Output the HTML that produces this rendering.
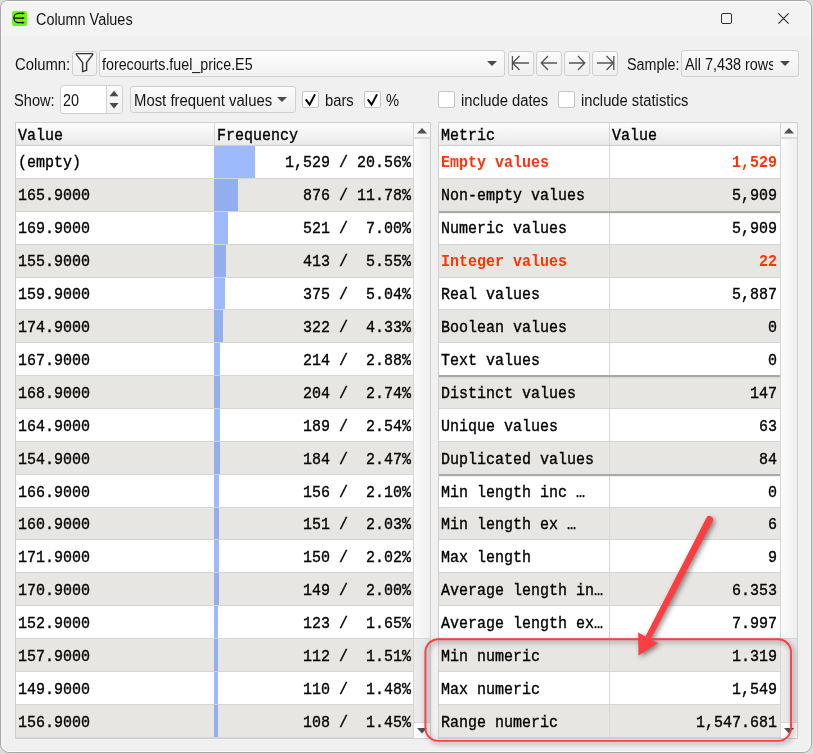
<!DOCTYPE html><html><head><meta charset="utf-8"><title>Column Values</title><style>
*{margin:0;padding:0;box-sizing:border-box}
html,body{width:813px;height:754px;overflow:hidden;background:#dcdcdc}
body{position:relative;font-family:"Liberation Sans",sans-serif;color:#000}
.a{position:absolute}
#win{left:0;top:0;width:812px;height:753px;background:#f0f0f0;border:1px solid #a6a6a6;border-radius:8px 8px 9px 9px;overflow:hidden}
#hl{left:1px;top:1px;width:810px;height:751px;border:1px solid rgba(255,255,255,0.55);border-radius:7px 7px 8px 8px}
#title{left:0;top:0;width:810px;height:35px;background:#f3f3f3;border-top:1px solid #fafafa}
.ui{font-size:16px;white-space:pre;line-height:1;transform-origin:0 0;color:#141414}
.mono{font-family:"Liberation Mono",monospace;font-size:16px;white-space:pre;line-height:1;transform:scaleX(0.9375);transform-origin:0 0;color:#000;-webkit-text-stroke:0.35px #000}
.mr{transform-origin:100% 0;text-align:right}
.btn{background:linear-gradient(#fbfbfb,#efefef);border:1px solid #d0d0d0;border-radius:3px}
.field{background:#fff;border:1px solid #d0d0d0;border-radius:3px}
.tbl{background:#fff;border:1px solid #cfcfcf;overflow:hidden}
.hdr{background:linear-gradient(#fdfdfd,#e9e9e9);border-bottom:1px solid #cdcdcd}
.g{background:#e8e6e2}
.bar{background:rgba(59,117,249,0.5)}
.gl{height:1px;background:#d5d5d5}
.sep{height:2px;background:#a9a9a9}
.red{color:#ff3208;font-weight:bold;-webkit-text-stroke:0}
.chk{background:#fff;border:1px solid #c6c6c6;border-radius:2px}
.track{background:linear-gradient(90deg,#fbfbfb,#efefef);border-left:1px solid #d6d6d6}
.sbtn{background:#f7f7f7}
.thumb{background:linear-gradient(90deg,#ececec,#e3e3e3);border-top:1px solid #d6d6d6}
</style></head><body>
<div id="win" class="a"><div id="title" class="a"></div></div><div id="hl" class="a"></div>
<div class="a" style="left:12px;top:10.5px;width:15.2px;height:15.3px;background:#6cf614;border-radius:2px"></div>
<svg class="a" style="left:12px;top:10px" width="16" height="16" viewBox="0 0 16 16"><path d="M11.5 3.4H6.4A4.5 4.5 0 0 0 6.4 12.6H11.5M1.9 8H11.5" fill="none" stroke="#0a0a0a" stroke-width="1.25"/><path d="M10.2 2.3L12.9 3.4L10.2 4.5Z M10.2 6.9L12.9 8L10.2 9.1Z M10.2 11.5L12.9 12.6L10.2 13.7Z" fill="#0a0a0a"/></svg>
<div class="a ui" style="left:36px;top:12.00px;transform:scaleX(0.9000);">Column Values</div>
<div class="a" style="left:721px;top:13px;width:11px;height:11px;border:1.4px solid #303030;border-radius:2px"></div>
<svg class="a" style="left:778px;top:13px" width="11" height="11" viewBox="0 0 11 11"><path d="M0.4 0.4L10.6 10.6M10.6 0.4L0.4 10.6" stroke="#303030" stroke-width="1.15"/></svg>
<div class="a ui" style="left:14.5px;top:57.00px;transform:scaleX(0.9270);">Column:</div>
<div class="a btn" style="left:72px;top:51px;width:25px;height:25px"></div>
<svg class="a" style="left:72px;top:51px" width="25" height="25" viewBox="0 0 25 25"><path d="M4.6 2.6H20.2Q21 2.6 20.7 3.6L14.6 11.6V19.4L10.6 20.6V11.6L4.4 3.6Q4 2.6 4.6 2.6Z" fill="none" stroke="#333" stroke-width="1.45" stroke-linejoin="round"/></svg>
<div class="a btn" style="left:99px;top:50px;width:406px;height:27px;background:linear-gradient(#fdfdfd,#f2f2f2)"></div>
<div class="a ui" style="left:102px;top:57.00px;transform:scaleX(0.8910);">forecourts.fuel_price.E5</div>
<svg class="a" style="left:487px;top:61px" width="10" height="5"><path d="M0 0H10L5 5Z" fill="#4a4a4a"/></svg>
<div class="a btn" style="left:508px;top:51px;width:26px;height:25px"></div>
<div class="a btn" style="left:536px;top:51px;width:26px;height:25px"></div>
<div class="a btn" style="left:564px;top:51px;width:26px;height:25px"></div>
<div class="a btn" style="left:592px;top:51px;width:26px;height:25px"></div>
<svg class="a" style="left:508px;top:51px" width="26" height="25"><path d="M4.4 5V19M4.6 12H21M11.5 5L4.6 12L11.5 19" fill="none" stroke="#51565c" stroke-width="1.3"/></svg>
<svg class="a" style="left:536px;top:51px" width="26" height="25"><path d="M5.2 12H21M12 5L5.2 12L12 19" fill="none" stroke="#51565c" stroke-width="1.3"/></svg>
<svg class="a" style="left:564px;top:51px" width="26" height="25"><path d="M5 12H20.8M14 5L20.8 12L14 19" fill="none" stroke="#51565c" stroke-width="1.3"/></svg>
<svg class="a" style="left:592px;top:51px" width="26" height="25"><path d="M21.8 5V19M5 12H21.4M14.5 5L21.4 12L14.5 19" fill="none" stroke="#51565c" stroke-width="1.3"/></svg>
<div class="a ui" style="left:627.3px;top:57.00px;transform:scaleX(0.8940);">Sample:</div>
<div class="a btn" style="left:681px;top:50px;width:118px;height:27px"></div>
<div class="a" style="left:684px;top:50px;width:89px;height:26px;overflow:hidden">
<div class="a ui" style="left:1px;top:7.00px;transform:scaleX(0.9000);">All 7,438 rows</div>
</div>
<svg class="a" style="left:780px;top:61px" width="10" height="5"><path d="M0 0H10L5 5Z" fill="#4a4a4a"/></svg>
<div class="a ui" style="left:14px;top:93.00px;transform:scaleX(0.9150);">Show:</div>
<div class="a field" style="left:60px;top:85px;width:63px;height:29px"></div>
<div class="a" style="left:106px;top:86px;width:16px;height:27px;background:linear-gradient(#fafafa,#f1f1f1);border-left:1px solid #d3d3d3;border-radius:0 2px 2px 0"></div>
<svg class="a" style="left:109px;top:90px" width="10" height="19"><path d="M0.5 6.3H9.5L5 0.8Z M0.5 13H9.5L5 18.5Z" fill="#4a4a4a"/></svg>
<div class="a ui" style="left:63px;top:93.00px;transform:scaleX(0.9000);">20</div>
<div class="a btn" style="left:130px;top:86px;width:166px;height:27px"></div>
<div class="a ui" style="left:134px;top:93.00px;transform:scaleX(0.9300);">Most frequent values</div>
<svg class="a" style="left:277px;top:97px" width="10" height="5"><path d="M0 0H10L5 5Z" fill="#4a4a4a"/></svg>
<div class="a chk" style="left:302px;top:91px;width:17px;height:17px"></div>
<div class="a chk" style="left:364px;top:91px;width:17px;height:17px"></div>
<div class="a chk" style="left:438px;top:91px;width:17px;height:17px"></div>
<div class="a chk" style="left:558px;top:91px;width:17px;height:17px"></div>
<svg class="a" style="left:302px;top:91px" width="17" height="17" viewBox="0 0 17 17"><path d="M3.8 8.3L7.6 13.7L13 3.4" fill="none" stroke="#000" stroke-width="2"/></svg>
<svg class="a" style="left:364px;top:91px" width="17" height="17" viewBox="0 0 17 17"><path d="M3.8 8.3L7.6 13.7L13 3.4" fill="none" stroke="#000" stroke-width="2"/></svg>
<div class="a ui" style="left:325px;top:93.00px;transform:scaleX(0.9240);">bars</div>
<div class="a ui" style="left:385.5px;top:93.00px;transform:scaleX(0.9200);">%</div>
<div class="a ui" style="left:460.6px;top:93.00px;transform:scaleX(0.9240);">include dates</div>
<div class="a ui" style="left:580.6px;top:93.00px;transform:scaleX(0.9220);">include statistics</div>
<div class="a tbl" style="left:15px;top:122px;width:416px;height:617px">
<div class="a hdr" style="left:0;top:0;width:397px;height:23px"></div>
<div class="a" style="left:198px;top:0;width:1px;height:22px;background:#d6d6d6"></div>
<div class="a mono" style="left:2px;top:5px">Value</div>
<div class="a mono" style="left:201px;top:5px">Frequency</div>
<div class="a gl" style="left:0;top:55.00px;width:397px"></div>
<div class="a bar" style="left:198px;top:23.14px;width:40.58px;height:31.86px"></div>
<div class="a mono" style="left:2px;top:32.44px">(empty)</div>
<div class="a mono mr" style="left:95px;width:300px;top:32.44px">1,529 / 20.56%</div>
<div class="a g" style="left:0;top:56.00px;width:397px;height:31.86px"></div>
<div class="a gl" style="left:0;top:87.86px;width:397px"></div>
<div class="a bar" style="left:198px;top:56.00px;width:23.64px;height:31.86px"></div>
<div class="a mono" style="left:2px;top:65.35px">165.9000</div>
<div class="a mono mr" style="left:95px;width:300px;top:65.35px">876 / 11.78%</div>
<div class="a gl" style="left:0;top:120.72px;width:397px"></div>
<div class="a bar" style="left:198px;top:88.86px;width:14.41px;height:31.86px"></div>
<div class="a mono" style="left:2px;top:98.26px">169.9000</div>
<div class="a mono mr" style="left:95px;width:300px;top:98.26px">521 /  7.00%</div>
<div class="a g" style="left:0;top:121.72px;width:397px;height:31.86px"></div>
<div class="a gl" style="left:0;top:153.58px;width:397px"></div>
<div class="a bar" style="left:198px;top:121.72px;width:11.61px;height:31.86px"></div>
<div class="a mono" style="left:2px;top:131.17px">155.9000</div>
<div class="a mono mr" style="left:95px;width:300px;top:131.17px">413 /  5.55%</div>
<div class="a gl" style="left:0;top:186.44px;width:397px"></div>
<div class="a bar" style="left:198px;top:154.58px;width:10.63px;height:31.86px"></div>
<div class="a mono" style="left:2px;top:164.08px">159.9000</div>
<div class="a mono mr" style="left:95px;width:300px;top:164.08px">375 /  5.04%</div>
<div class="a g" style="left:0;top:187.44px;width:397px;height:31.86px"></div>
<div class="a gl" style="left:0;top:219.30px;width:397px"></div>
<div class="a bar" style="left:198px;top:187.44px;width:9.26px;height:31.86px"></div>
<div class="a mono" style="left:2px;top:196.99px">174.9000</div>
<div class="a mono mr" style="left:95px;width:300px;top:196.99px">322 /  4.33%</div>
<div class="a gl" style="left:0;top:252.16px;width:397px"></div>
<div class="a bar" style="left:198px;top:220.30px;width:6.46px;height:31.86px"></div>
<div class="a mono" style="left:2px;top:229.90px">167.9000</div>
<div class="a mono mr" style="left:95px;width:300px;top:229.90px">214 /  2.88%</div>
<div class="a g" style="left:0;top:253.16px;width:397px;height:31.86px"></div>
<div class="a gl" style="left:0;top:285.02px;width:397px"></div>
<div class="a bar" style="left:198px;top:253.16px;width:6.19px;height:31.86px"></div>
<div class="a mono" style="left:2px;top:262.81px">168.9000</div>
<div class="a mono mr" style="left:95px;width:300px;top:262.81px">204 /  2.74%</div>
<div class="a gl" style="left:0;top:317.88px;width:397px"></div>
<div class="a bar" style="left:198px;top:286.02px;width:5.80px;height:31.86px"></div>
<div class="a mono" style="left:2px;top:295.72px">164.9000</div>
<div class="a mono mr" style="left:95px;width:300px;top:295.72px">189 /  2.54%</div>
<div class="a g" style="left:0;top:318.88px;width:397px;height:31.86px"></div>
<div class="a gl" style="left:0;top:350.74px;width:397px"></div>
<div class="a bar" style="left:198px;top:318.88px;width:5.67px;height:31.86px"></div>
<div class="a mono" style="left:2px;top:328.63px">154.9000</div>
<div class="a mono mr" style="left:95px;width:300px;top:328.63px">184 /  2.47%</div>
<div class="a gl" style="left:0;top:383.60px;width:397px"></div>
<div class="a bar" style="left:198px;top:351.74px;width:4.95px;height:31.86px"></div>
<div class="a mono" style="left:2px;top:361.54px">166.9000</div>
<div class="a mono mr" style="left:95px;width:300px;top:361.54px">156 /  2.10%</div>
<div class="a g" style="left:0;top:384.60px;width:397px;height:31.86px"></div>
<div class="a gl" style="left:0;top:416.46px;width:397px"></div>
<div class="a bar" style="left:198px;top:384.60px;width:4.82px;height:31.86px"></div>
<div class="a mono" style="left:2px;top:394.45px">160.9000</div>
<div class="a mono mr" style="left:95px;width:300px;top:394.45px">151 /  2.03%</div>
<div class="a gl" style="left:0;top:449.32px;width:397px"></div>
<div class="a bar" style="left:198px;top:417.46px;width:4.80px;height:31.86px"></div>
<div class="a mono" style="left:2px;top:427.36px">171.9000</div>
<div class="a mono mr" style="left:95px;width:300px;top:427.36px">150 /  2.02%</div>
<div class="a g" style="left:0;top:450.32px;width:397px;height:31.86px"></div>
<div class="a gl" style="left:0;top:482.18px;width:397px"></div>
<div class="a bar" style="left:198px;top:450.32px;width:4.76px;height:31.86px"></div>
<div class="a mono" style="left:2px;top:460.27px">170.9000</div>
<div class="a mono mr" style="left:95px;width:300px;top:460.27px">149 /  2.00%</div>
<div class="a gl" style="left:0;top:515.04px;width:397px"></div>
<div class="a bar" style="left:198px;top:483.18px;width:4.08px;height:31.86px"></div>
<div class="a mono" style="left:2px;top:493.18px">152.9000</div>
<div class="a mono mr" style="left:95px;width:300px;top:493.18px">123 /  1.65%</div>
<div class="a g" style="left:0;top:516.04px;width:397px;height:31.86px"></div>
<div class="a gl" style="left:0;top:547.90px;width:397px"></div>
<div class="a bar" style="left:198px;top:516.04px;width:3.81px;height:31.86px"></div>
<div class="a mono" style="left:2px;top:526.09px">157.9000</div>
<div class="a mono mr" style="left:95px;width:300px;top:526.09px">112 /  1.51%</div>
<div class="a gl" style="left:0;top:580.76px;width:397px"></div>
<div class="a bar" style="left:198px;top:548.90px;width:3.76px;height:31.86px"></div>
<div class="a mono" style="left:2px;top:559.00px">149.9000</div>
<div class="a mono mr" style="left:95px;width:300px;top:559.00px">110 /  1.48%</div>
<div class="a g" style="left:0;top:581.76px;width:397px;height:31.86px"></div>
<div class="a gl" style="left:0;top:613.62px;width:397px"></div>
<div class="a bar" style="left:198px;top:581.76px;width:3.70px;height:31.86px"></div>
<div class="a mono" style="left:2px;top:591.91px">156.9000</div>
<div class="a mono mr" style="left:95px;width:300px;top:591.91px">108 /  1.45%</div>
<div class="a track" style="left:397px;top:0;width:17px;height:617px"></div>
<div class="a sbtn" style="left:398px;top:0;width:16px;height:16px;border-bottom:2px solid #dcdcdc"></div>
<svg class="a" style="left:401px;top:5px" width="10" height="6"><path d="M0 5.5H10L5 0Z" fill="#505050"/></svg>
<div class="a thumb" style="left:398px;top:514.5px;width:16px;height:84px"></div>
<div class="a sbtn" style="left:398px;top:599px;width:16px;height:16px;border-top:1px solid #d8d8d8;background:#fbfbfb"></div>
<svg class="a" style="left:401px;top:605px" width="10" height="6"><path d="M0 0H10L5 5.5Z" fill="#505050"/></svg>
</div>
<div class="a tbl" style="left:438px;top:122px;width:360px;height:617px">
<div class="a hdr" style="left:0;top:0;width:341px;height:23px"></div>
<div class="a" style="left:170px;top:0;width:1px;height:22px;background:#d6d6d6"></div>
<div class="a mono" style="left:2px;top:5px">Metric</div>
<div class="a mono" style="left:173px;top:5px">Value</div>
<div class="a gl" style="left:0;top:55.00px;width:341px"></div>
<div class="a" style="left:170px;top:23.14px;width:1px;height:31.86px;background:#d8d8d8"></div>
<div class="a mono red" style="left:2px;top:32.44px">Empty values</div>
<div class="a mono mr red" style="left:38px;width:300px;top:32.44px">1,529</div>
<div class="a g" style="left:0;top:56.00px;width:341px;height:31.86px"></div>
<div class="a" style="left:170px;top:56.00px;width:1px;height:31.86px;background:#d8d8d8"></div>
<div class="a mono" style="left:2px;top:65.35px">Non-empty values</div>
<div class="a mono mr" style="left:38px;width:300px;top:65.35px">5,909</div>
<div class="a gl" style="left:0;top:120.72px;width:341px"></div>
<div class="a" style="left:170px;top:88.86px;width:1px;height:31.86px;background:#d8d8d8"></div>
<div class="a mono" style="left:2px;top:98.26px">Numeric values</div>
<div class="a mono mr" style="left:38px;width:300px;top:98.26px">5,909</div>
<div class="a g" style="left:0;top:121.72px;width:341px;height:31.86px"></div>
<div class="a gl" style="left:0;top:153.58px;width:341px"></div>
<div class="a" style="left:170px;top:121.72px;width:1px;height:31.86px;background:#d8d8d8"></div>
<div class="a mono red" style="left:2px;top:131.17px">Integer values</div>
<div class="a mono mr red" style="left:38px;width:300px;top:131.17px">22</div>
<div class="a gl" style="left:0;top:186.44px;width:341px"></div>
<div class="a" style="left:170px;top:154.58px;width:1px;height:31.86px;background:#d8d8d8"></div>
<div class="a mono" style="left:2px;top:164.08px">Real values</div>
<div class="a mono mr" style="left:38px;width:300px;top:164.08px">5,887</div>
<div class="a g" style="left:0;top:187.44px;width:341px;height:31.86px"></div>
<div class="a gl" style="left:0;top:219.30px;width:341px"></div>
<div class="a" style="left:170px;top:187.44px;width:1px;height:31.86px;background:#d8d8d8"></div>
<div class="a mono" style="left:2px;top:196.99px">Boolean values</div>
<div class="a mono mr" style="left:38px;width:300px;top:196.99px">0</div>
<div class="a" style="left:170px;top:220.30px;width:1px;height:31.86px;background:#d8d8d8"></div>
<div class="a mono" style="left:2px;top:229.90px">Text values</div>
<div class="a mono mr" style="left:38px;width:300px;top:229.90px">0</div>
<div class="a g" style="left:0;top:253.16px;width:341px;height:31.86px"></div>
<div class="a gl" style="left:0;top:285.02px;width:341px"></div>
<div class="a" style="left:170px;top:253.16px;width:1px;height:31.86px;background:#d8d8d8"></div>
<div class="a mono" style="left:2px;top:262.81px">Distinct values</div>
<div class="a mono mr" style="left:38px;width:300px;top:262.81px">147</div>
<div class="a gl" style="left:0;top:317.88px;width:341px"></div>
<div class="a" style="left:170px;top:286.02px;width:1px;height:31.86px;background:#d8d8d8"></div>
<div class="a mono" style="left:2px;top:295.72px">Unique values</div>
<div class="a mono mr" style="left:38px;width:300px;top:295.72px">63</div>
<div class="a g" style="left:0;top:318.88px;width:341px;height:31.86px"></div>
<div class="a" style="left:170px;top:318.88px;width:1px;height:31.86px;background:#d8d8d8"></div>
<div class="a mono" style="left:2px;top:328.63px">Duplicated values</div>
<div class="a mono mr" style="left:38px;width:300px;top:328.63px">84</div>
<div class="a gl" style="left:0;top:383.60px;width:341px"></div>
<div class="a" style="left:170px;top:351.74px;width:1px;height:31.86px;background:#d8d8d8"></div>
<div class="a mono" style="left:2px;top:361.54px">Min length inc …</div>
<div class="a mono mr" style="left:38px;width:300px;top:361.54px">0</div>
<div class="a g" style="left:0;top:384.60px;width:341px;height:31.86px"></div>
<div class="a gl" style="left:0;top:416.46px;width:341px"></div>
<div class="a" style="left:170px;top:384.60px;width:1px;height:31.86px;background:#d8d8d8"></div>
<div class="a mono" style="left:2px;top:394.45px">Min length ex …</div>
<div class="a mono mr" style="left:38px;width:300px;top:394.45px">6</div>
<div class="a gl" style="left:0;top:449.32px;width:341px"></div>
<div class="a" style="left:170px;top:417.46px;width:1px;height:31.86px;background:#d8d8d8"></div>
<div class="a mono" style="left:2px;top:427.36px">Max length</div>
<div class="a mono mr" style="left:38px;width:300px;top:427.36px">9</div>
<div class="a g" style="left:0;top:450.32px;width:341px;height:31.86px"></div>
<div class="a gl" style="left:0;top:482.18px;width:341px"></div>
<div class="a" style="left:170px;top:450.32px;width:1px;height:31.86px;background:#d8d8d8"></div>
<div class="a mono" style="left:2px;top:460.27px">Average length in…</div>
<div class="a mono mr" style="left:38px;width:300px;top:460.27px">6.353</div>
<div class="a gl" style="left:0;top:515.04px;width:341px"></div>
<div class="a" style="left:170px;top:483.18px;width:1px;height:31.86px;background:#d8d8d8"></div>
<div class="a mono" style="left:2px;top:493.18px">Average length ex…</div>
<div class="a mono mr" style="left:38px;width:300px;top:493.18px">7.997</div>
<div class="a g" style="left:0;top:516.04px;width:341px;height:31.86px"></div>
<div class="a gl" style="left:0;top:547.90px;width:341px"></div>
<div class="a" style="left:170px;top:516.04px;width:1px;height:31.86px;background:#d8d8d8"></div>
<div class="a mono" style="left:2px;top:526.09px">Min numeric</div>
<div class="a mono mr" style="left:38px;width:300px;top:526.09px">1.319</div>
<div class="a gl" style="left:0;top:580.76px;width:341px"></div>
<div class="a" style="left:170px;top:548.90px;width:1px;height:31.86px;background:#d8d8d8"></div>
<div class="a mono" style="left:2px;top:559.00px">Max numeric</div>
<div class="a mono mr" style="left:38px;width:300px;top:559.00px">1,549</div>
<div class="a g" style="left:0;top:581.76px;width:341px;height:31.86px"></div>
<div class="a gl" style="left:0;top:613.62px;width:341px"></div>
<div class="a" style="left:170px;top:581.76px;width:1px;height:31.86px;background:#d8d8d8"></div>
<div class="a mono" style="left:2px;top:591.91px">Range numeric</div>
<div class="a mono mr" style="left:38px;width:300px;top:591.91px">1,547.681</div>
<div class="a sep" style="left:0;top:87.86px;width:341px"></div>
<div class="a" style="left:0;top:89.86px;width:341px;height:1px;background:rgba(0,0,0,0.06)"></div>
<div class="a sep" style="left:0;top:252.16px;width:341px"></div>
<div class="a" style="left:0;top:254.16px;width:341px;height:1px;background:rgba(0,0,0,0.06)"></div>
<div class="a sep" style="left:0;top:350.74px;width:341px"></div>
<div class="a" style="left:0;top:352.74px;width:341px;height:1px;background:rgba(0,0,0,0.06)"></div>
<div class="a track" style="left:341px;top:0;width:17px;height:617px"></div>
<div class="a sbtn" style="left:342px;top:0;width:16px;height:16px;border-bottom:2px solid #dcdcdc"></div>
<svg class="a" style="left:345px;top:5px" width="10" height="6"><path d="M0 5.5H10L5 0Z" fill="#505050"/></svg>
<div class="a thumb" style="left:342px;top:514.5px;width:16px;height:84px"></div>
<div class="a sbtn" style="left:342px;top:599px;width:16px;height:16px;border-top:1px solid #d8d8d8;background:#fbfbfb"></div>
<svg class="a" style="left:345px;top:605px" width="10" height="6"><path d="M0 0H10L5 5.5Z" fill="#505050"/></svg>
</div>
<svg class="a" style="left:0;top:0;filter:drop-shadow(2px 2.5px 2.5px rgba(0,0,0,0.45))" width="813" height="754"><rect x="425.4" y="639.2" width="365.6" height="101.7" rx="12.9" fill="none" stroke="#fb3e42" stroke-width="1.9"/><path d="M706.3 517.9A3.6 3.6 0 0 1 712.7 521.3L650.6 639.4L645.4 636.6Z" fill="#fb3e42"/><path d="M638.5 655.6L638.2 632.6L657.9 643.3Z" fill="#fb3e42"/></svg>
</body></html>
